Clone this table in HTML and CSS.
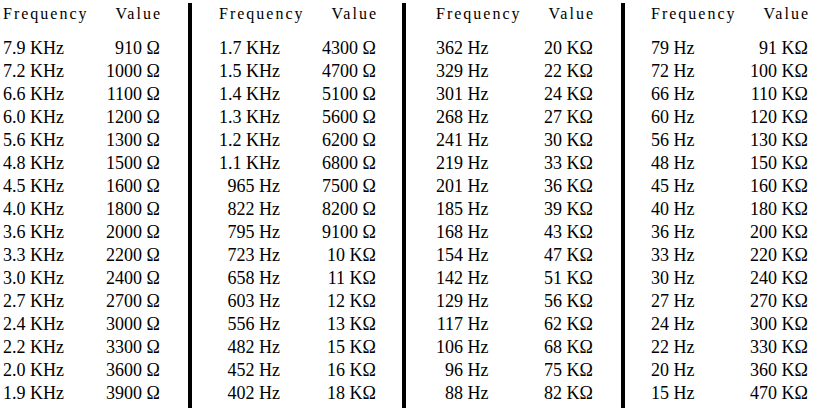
FILE: index.html
```html
<!DOCTYPE html>
<html>
<head>
<meta charset="utf-8">
<link rel="stylesheet" href="styles.css">
</head>
<body>
<div class="sheet">
  <div class="group g1">
    <div class="hf">Frequency</div><div class="hv">Value</div>
    <div class="f">7.9 KHz</div><div class="v">910 Ω</div>
    <div class="f">7.2 KHz</div><div class="v">1000 Ω</div>
    <div class="f">6.6 KHz</div><div class="v">1100 Ω</div>
    <div class="f">6.0 KHz</div><div class="v">1200 Ω</div>
    <div class="f">5.6 KHz</div><div class="v">1300 Ω</div>
    <div class="f">4.8 KHz</div><div class="v">1500 Ω</div>
    <div class="f">4.5 KHz</div><div class="v">1600 Ω</div>
    <div class="f">4.0 KHz</div><div class="v">1800 Ω</div>
    <div class="f">3.6 KHz</div><div class="v">2000 Ω</div>
    <div class="f">3.3 KHz</div><div class="v">2200 Ω</div>
    <div class="f">3.0 KHz</div><div class="v">2400 Ω</div>
    <div class="f">2.7 KHz</div><div class="v">2700 Ω</div>
    <div class="f">2.4 KHz</div><div class="v">3000 Ω</div>
    <div class="f">2.2 KHz</div><div class="v">3300 Ω</div>
    <div class="f">2.0 KHz</div><div class="v">3600 Ω</div>
    <div class="f">1.9 KHz</div><div class="v">3900 Ω</div>
  </div>
  <div class="group g2">
    <div class="hf">Frequency</div><div class="hv">Value</div>
    <div class="f">1.7 KHz</div><div class="v">4300 Ω</div>
    <div class="f">1.5 KHz</div><div class="v">4700 Ω</div>
    <div class="f">1.4 KHz</div><div class="v">5100 Ω</div>
    <div class="f">1.3 KHz</div><div class="v">5600 Ω</div>
    <div class="f">1.2 KHz</div><div class="v">6200 Ω</div>
    <div class="f">1.1 KHz</div><div class="v">6800 Ω</div>
    <div class="f">965 Hz</div><div class="v">7500 Ω</div>
    <div class="f">822 Hz</div><div class="v">8200 Ω</div>
    <div class="f">795 Hz</div><div class="v">9100 Ω</div>
    <div class="f">723 Hz</div><div class="v">10 KΩ</div>
    <div class="f">658 Hz</div><div class="v">11 KΩ</div>
    <div class="f">603 Hz</div><div class="v">12 KΩ</div>
    <div class="f">556 Hz</div><div class="v">13 KΩ</div>
    <div class="f">482 Hz</div><div class="v">15 KΩ</div>
    <div class="f">452 Hz</div><div class="v">16 KΩ</div>
    <div class="f">402 Hz</div><div class="v">18 KΩ</div>
  </div>
  <div class="group g3">
    <div class="hf">Frequency</div><div class="hv">Value</div>
    <div class="f">362 Hz</div><div class="v">20 KΩ</div>
    <div class="f">329 Hz</div><div class="v">22 KΩ</div>
    <div class="f">301 Hz</div><div class="v">24 KΩ</div>
    <div class="f">268 Hz</div><div class="v">27 KΩ</div>
    <div class="f">241 Hz</div><div class="v">30 KΩ</div>
    <div class="f">219 Hz</div><div class="v">33 KΩ</div>
    <div class="f">201 Hz</div><div class="v">36 KΩ</div>
    <div class="f">185 Hz</div><div class="v">39 KΩ</div>
    <div class="f">168 Hz</div><div class="v">43 KΩ</div>
    <div class="f">154 Hz</div><div class="v">47 KΩ</div>
    <div class="f">142 Hz</div><div class="v">51 KΩ</div>
    <div class="f">129 Hz</div><div class="v">56 KΩ</div>
    <div class="f">117 Hz</div><div class="v">62 KΩ</div>
    <div class="f">106 Hz</div><div class="v">68 KΩ</div>
    <div class="f">96 Hz</div><div class="v">75 KΩ</div>
    <div class="f">88 Hz</div><div class="v">82 KΩ</div>
  </div>
  <div class="group g4">
    <div class="hf">Frequency</div><div class="hv">Value</div>
    <div class="f">79 Hz</div><div class="v">91 KΩ</div>
    <div class="f">72 Hz</div><div class="v">100 KΩ</div>
    <div class="f">66 Hz</div><div class="v">110 KΩ</div>
    <div class="f">60 Hz</div><div class="v">120 KΩ</div>
    <div class="f">56 Hz</div><div class="v">130 KΩ</div>
    <div class="f">48 Hz</div><div class="v">150 KΩ</div>
    <div class="f">45 Hz</div><div class="v">160 KΩ</div>
    <div class="f">40 Hz</div><div class="v">180 KΩ</div>
    <div class="f">36 Hz</div><div class="v">200 KΩ</div>
    <div class="f">33 Hz</div><div class="v">220 KΩ</div>
    <div class="f">30 Hz</div><div class="v">240 KΩ</div>
    <div class="f">27 Hz</div><div class="v">270 KΩ</div>
    <div class="f">24 Hz</div><div class="v">300 KΩ</div>
    <div class="f">22 Hz</div><div class="v">330 KΩ</div>
    <div class="f">20 Hz</div><div class="v">360 KΩ</div>
    <div class="f">15 Hz</div><div class="v">470 KΩ</div>
  </div>
</div>
</body>
</html>
```

FILE: styles.css
```css
html, body {
  margin: 0;
  padding: 0;
  background: #fff;
  overflow: hidden;
}

body {
  font-family: "Liberation Serif", "Times New Roman", serif;
  color: #000;
}

.sheet {
  display: flex;
  align-items: stretch;
  height: 405px;
  margin-top: 3px;
  padding-left: 3px;
}

.group {
  width: 157px;
  display: grid;
  grid-template-columns: max-content 1fr max-content;
  grid-template-rows: 33.6px;
  grid-auto-rows: 23px;
  align-content: start;
  font-size: 18px;
  line-height: 23px;
}

.g1 { padding-right: 28px; }
.g2 { padding: 0 26px 0 27px; border-left: 4px solid #000; }
.g3 { padding: 0 28px 0 30px; border-left: 4px solid #000; }
.g4 { padding-left: 26px; border-left: 4px solid #000; }

.hf, .hv {
  font-size: 16px;
  letter-spacing: 2px;
  margin-top: -1px;
}

.hf {
  grid-column: 1 / 3;
  justify-self: start;
}

.hv {
  grid-column: 3;
  justify-self: end;
  margin-right: -2px;
}

.f {
  grid-column: 1;
  justify-self: end;
  white-space: nowrap;
}

.v {
  grid-column: 3;
  justify-self: end;
  white-space: nowrap;
}
```
